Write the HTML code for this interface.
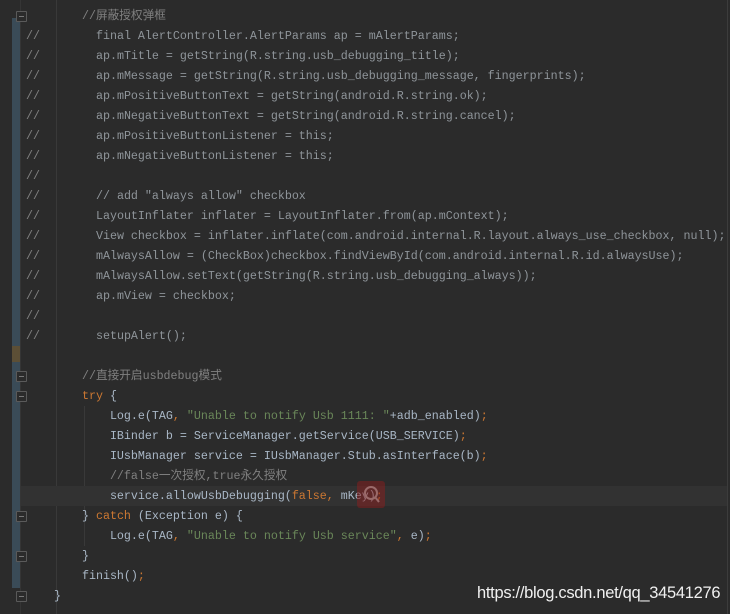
<!DOCTYPE html>
<html><head><meta charset="utf-8"><style>
html,body{margin:0;padding:0;}
body{width:730px;height:614px;background:#2b2b2b;position:relative;overflow:hidden;font-family:"Liberation Mono","Noto Sans CJK SC",monospace;font-size:11.67px;}
.bar{position:absolute;left:12px;top:18px;width:8px;height:570px;background:#3a4b57;}
.y{position:absolute;left:12px;top:346px;width:8px;height:16px;background:#5c4f36;}
.sep{position:absolute;left:20px;top:0;width:1px;height:614px;background:#353535;}
.g{position:absolute;width:1px;background:#393939;}
.hl{position:absolute;left:21px;top:486px;width:706px;height:20px;background:#323232;}
.rl{position:absolute;left:727px;top:0;width:1px;height:614px;background:#3c3c3c;}
.code{position:absolute;left:26px;top:6px;white-space:pre;line-height:20px;color:#a9b7c6;}
.c{color:#808080}.cc{color:#8f959a}.k{color:#cc7832}.s{color:#6a8759}
.f{position:absolute;left:16px;width:9px;height:9px;border:1px solid #5a5a5a;border-radius:1px;background:#2b2b2b;}
.f:after{content:"";position:absolute;left:2px;top:4px;width:5px;height:1px;background:#777;}
.srch{position:absolute;left:357px;top:481px;width:28px;height:27px;background:rgba(140,30,30,0.5);border-radius:3px;}
.wm{position:absolute;left:477px;top:584px;font-family:"Liberation Sans",sans-serif;font-size:16.5px;color:#f0f0f0;letter-spacing:-0.3px;}
</style></head><body>
<div class="bar"></div><div class="y"></div><div class="sep"></div>
<div class="g" style="left:56px;top:0;height:614px"></div>
<div class="g" style="left:84px;top:406px;height:140px"></div>
<div class="hl"></div><div class="rl"></div>
<div class="f" style="top:11px"></div>
<div class="f" style="top:371px"></div>
<div class="f" style="top:391px"></div>
<div class="f" style="top:511px"></div>
<div class="f" style="top:551px"></div>
<div class="f" style="top:591px"></div>
<div class="code"><span class="c">        //屏蔽授权弹框</span>
<span class="c">//</span><span class="cc">        final AlertController.AlertParams ap = mAlertParams;</span>
<span class="c">//</span><span class="cc">        ap.mTitle = getString(R.string.usb_debugging_title);</span>
<span class="c">//</span><span class="cc">        ap.mMessage = getString(R.string.usb_debugging_message, fingerprints);</span>
<span class="c">//</span><span class="cc">        ap.mPositiveButtonText = getString(android.R.string.ok);</span>
<span class="c">//</span><span class="cc">        ap.mNegativeButtonText = getString(android.R.string.cancel);</span>
<span class="c">//</span><span class="cc">        ap.mPositiveButtonListener = this;</span>
<span class="c">//</span><span class="cc">        ap.mNegativeButtonListener = this;</span>
<span class="c">//</span>
<span class="c">//</span><span class="cc">        // add "always allow" checkbox</span>
<span class="c">//</span><span class="cc">        LayoutInflater inflater = LayoutInflater.from(ap.mContext);</span>
<span class="c">//</span><span class="cc">        View checkbox = inflater.inflate(com.android.internal.R.layout.always_use_checkbox, null);</span>
<span class="c">//</span><span class="cc">        mAlwaysAllow = (CheckBox)checkbox.findViewById(com.android.internal.R.id.alwaysUse);</span>
<span class="c">//</span><span class="cc">        mAlwaysAllow.setText(getString(R.string.usb_debugging_always));</span>
<span class="c">//</span><span class="cc">        ap.mView = checkbox;</span>
<span class="c">//</span>
<span class="c">//</span><span class="cc">        setupAlert();</span>

<span class="c">        //直接开启usbdebug模式</span>
        <span class="k">try</span> {
            Log.e(TAG<span class="k">, </span><span class="s">"Unable to notify Usb 1111: "</span>+adb_enabled)<span class="k">;</span>
            IBinder b = ServiceManager.getService(USB_SERVICE)<span class="k">;</span>
            IUsbManager service = IUsbManager.Stub.asInterface(b)<span class="k">;</span>
<span class="c">            //false一次授权,true永久授权</span>
            service.allowUsbDebugging(<span class="k">false, </span>mKey)<span class="k">;</span>
        } <span class="k">catch</span> (Exception e) {
            Log.e(TAG<span class="k">, </span><span class="s">"Unable to notify Usb service"</span><span class="k">, </span>e)<span class="k">;</span>
        }
        finish()<span class="k">;</span>
    }</div>
<div class="srch"><svg width="28" height="27" viewBox="0 0 28 27"><circle cx="14" cy="12" r="6" fill="none" stroke="#9a6a6a" stroke-width="2"/><line x1="18" y1="16" x2="22" y2="21" stroke="#9a6a6a" stroke-width="2"/></svg></div>
<div class="wm">https://blog.csdn.net/qq_34541276</div>
</body></html>
